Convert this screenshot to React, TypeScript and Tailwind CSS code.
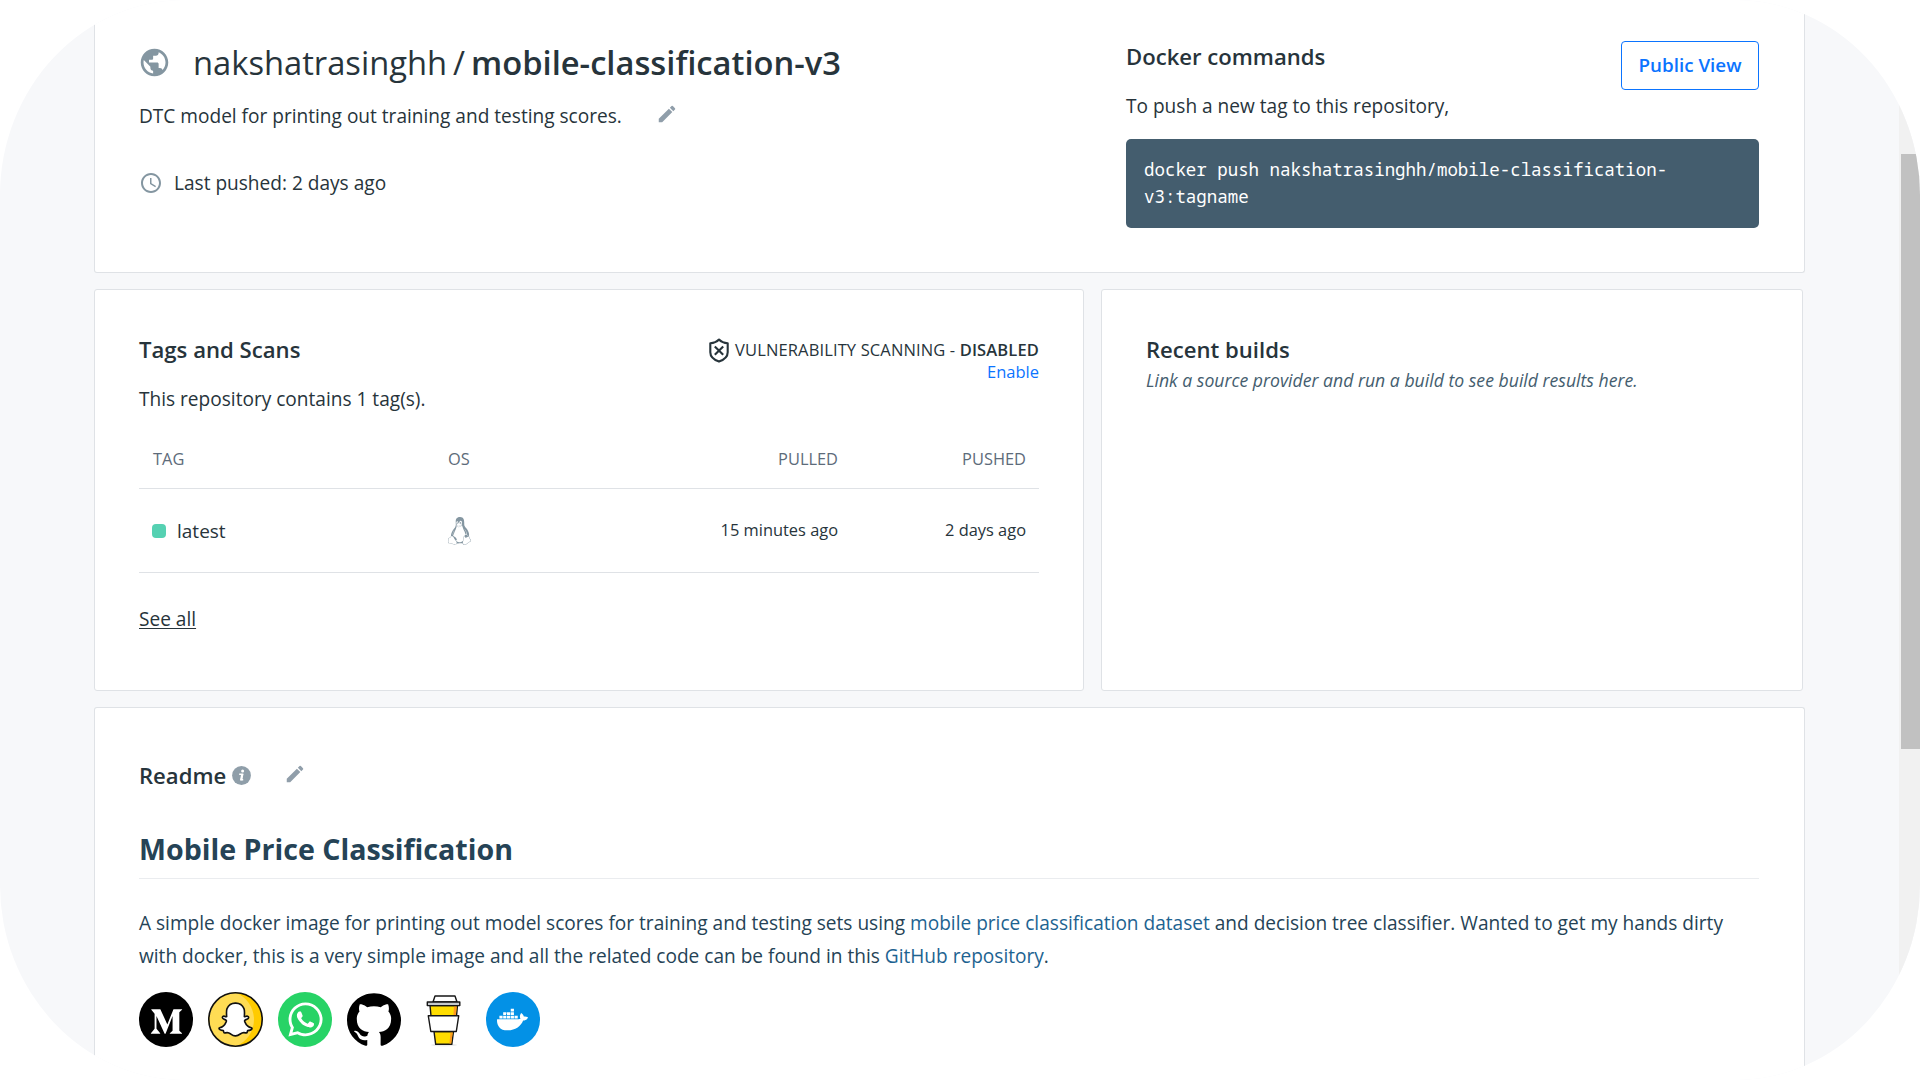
import React from 'react';
import { MdPublic, MdEdit, MdAccessTime } from 'react-icons/md';
import { FaLinux, FaMediumM, FaSnapchatGhost, FaWhatsapp, FaDocker } from 'react-icons/fa';
import { SiGithub } from 'react-icons/si';

function ShieldOff() {
  return (
    <svg viewBox="0 0 20 25" className="h-[25px] w-[20px]" fill="none" stroke="#27343b" strokeWidth="2.1" strokeLinejoin="round">
      <path d="M10 1.5C8 3.6 4.6 5 1.3 5.2V14.2C1.3 18.6 5.6 22 10 23.6C14.4 22 18.7 18.6 18.7 14.2V5.2C15.4 5 12 3.6 10 1.5Z" />
      <path d="M5.8 8.4L14.2 16.8M14.2 8.4L5.8 16.8" />
    </svg>
  );
}

function InfoBadge() {
  return (
    <svg viewBox="0 0 19 19" className="h-[19px] w-[19px]">
      <circle cx="9.5" cy="9.5" r="9.4" fill="#8f9ea9" />
      <circle cx="10.6" cy="4.9" r="1.5" fill="#fff" />
      <path d="M7.2 8.2H10.5L9.2 13.7H11.2" fill="none" stroke="#fff" strokeWidth="1.4" />
      <path d="M9.2 8L8 14.2H10.2L11.5 8Z" fill="#fff" />
    </svg>
  );
}

function CoffeeCup() {
  return (
    <svg viewBox="0 0 54 55" className="h-[55px] w-[54px]" stroke="#161616" strokeWidth="1.4" strokeLinejoin="round">
      <ellipse cx="27" cy="53" rx="13" ry="1.5" fill="#ececec" stroke="none" />
      <path d="M18 4H38L40 10H16Z" fill="#fff" />
      <path d="M13 13.5H40.5L39.5 24H14Z" fill="#ffdd00" />
      <path d="M37 14.3H39.7L38.8 23.5H36.4Z" fill="#ff9a1f" stroke="none" />
      <path d="M10.3 10H42.8V13.6H10.3Z" fill="#c6cacd" />
      <path d="M17 39.5H36.5L34.8 52.3H18.7Z" fill="#ffdd00" />
      <path d="M33.6 40.2H35.8L34.2 51.6H32.4Z" fill="#ff9a1f" stroke="none" />
      <path d="M11.3 23.8H41.7L39.3 39.5H13.8Z" fill="#fff" />
    </svg>
  );
}

function SnapBadge() {
  return (
    <div className="relative flex h-[55px] w-[55px] items-center justify-center">
      <svg viewBox="0 0 55 55" className="absolute inset-0 h-full w-full">
        <circle cx="27.5" cy="27.5" r="27" fill="#ffcb00" />
        <path d="M27.5 0.5A27 27 0 0 0 27.5 54.5C39 50 46 39 46 27.5C46 16 39 5 27.5 0.5Z" fill="#ffdc54" />
        <circle cx="27.5" cy="27.5" r="26.7" fill="none" stroke="#111" strokeWidth="1.6" />
      </svg>
      <FaSnapchatGhost className="relative h-[35px] w-[33px] overflow-visible text-white" stroke="#111" strokeWidth="25" preserveAspectRatio="none" />
    </div>
  );
}

const card = 'border border-[#dfe2e6] bg-white';

export default function App() {
  return (
    <div className="h-[1080px] w-[1920px] overflow-hidden bg-white font-['Open_Sans',sans-serif] text-[19.08px] leading-[26px] text-[#27343b]">
      <div className="flex h-full overflow-hidden rounded-[185px/195px] bg-[#f7f8fa]">
        <main className="ml-[94px] flex w-[1711px] shrink-0 flex-col gap-4">
          <section className="flex h-[273px] shrink-0 justify-between rounded-b-[3px] border border-t-0 border-[#dfe2e6] bg-white pt-[41px] pr-[45px] pl-[44px]">
            <div>
              <h1 className="mt-px flex h-10 items-center text-[32.7px] leading-10 whitespace-nowrap">
                <MdPublic className="-ml-px h-[33px] w-[33px] text-[#8496a1]" />
                <span className="mt-px ml-[22px]">nakshatrasinghh</span>
                <span className="mt-px ml-[6px]">/</span>
                <span className="mt-px ml-[6px] font-semibold">mobile-classification-v3</span>
              </h1>
              <div className="mt-[21px] flex items-center">
                <p>DTC model for printing out training and testing scores.</p>
                <MdEdit className="ml-[34px] -mt-1 h-[22px] w-[22px] text-[#909eaa]" />
              </div>
              <div className="mt-[41px] flex items-center">
                <MdAccessTime className="h-6 w-6 text-[#8496a1]" />
                <p className="ml-[11px]">Last pushed: 2 days ago</p>
              </div>
            </div>
            <div className="w-[633px]">
              <div className="flex h-[49px] justify-between">
                <h2 className="text-[22.1px] leading-[30px] font-semibold">Docker commands</h2>
                <button className="h-[49px] w-[138px] rounded-[4px] border border-[#0b74ff] pb-px text-[18.8px] font-semibold text-[#0b74ff]">Public View</button>
              </div>
              <p className="mt-[3px]">To push a new tag to this repository,</p>
              <pre className="mt-5 h-[89px] rounded-[5px] bg-[#445d6e] pt-[17px] pl-[18px] font-['Noto_Sans_Mono','DejaVu_Sans_Mono',monospace] text-[17.45px] leading-[27px] text-white">{'docker push nakshatrasinghh/mobile-classification-\nv3:tagname'}</pre>
            </div>
          </section>

          <div className="flex h-[402px] shrink-0 gap-[17px]">
            <section className={`${card} w-[990px] rounded-[3px] px-[44px] pt-[44px]`}>
              <div className="flex h-[52px] items-start justify-between">
                <h2 className="text-[22.15px] leading-[30px] font-semibold">Tags and Scans</h2>
                <div className="mt-[4px] text-[16.5px] leading-[22px]">
                  <div className="flex items-center">
                    <ShieldOff />
                    <span className="-mt-[2px] ml-[6px] whitespace-pre tracking-[0.13px]">VULNERABILITY SCANNING - <b className="font-semibold">DISABLED</b></span>
                  </div>
                  <p className="-mt-[2px] text-right text-[#0b74ff]">Enable</p>
                </div>
              </div>
              <p>This repository contains 1 tag(s).</p>
              <div className="mt-[35px] grid h-[42px] grid-cols-[295px_217px_200px_188px] border-b border-[#dfe2e6] text-[16.4px] leading-6 text-[#5d6b7a]">
                <span className="pl-[14px]">TAG</span>
                <span className="pl-[14px]">OS</span>
                <span className="pr-[13px] text-right">PULLED</span>
                <span className="pr-[13px] text-right">PUSHED</span>
              </div>
              <div className="grid h-[84px] grid-cols-[295px_217px_200px_188px] items-center border-b border-[#dfe2e6] text-[16.4px]">
                <div className="flex items-center pl-[13px]">
                  <span className="h-[14px] w-[14px] rounded-[4px] bg-[#55d1b2]" />
                  <span className="ml-[11px] text-[19px]">latest</span>
                </div>
                <div className="pl-[13px]"><FaLinux className="h-[28px] w-[25px] text-[#8496a1]" /></div>
                <span className="-mt-[2px] pr-[13px] text-right">15 minutes ago</span>
                <span className="-mt-[2px] pr-[13px] text-right">2 days ago</span>
              </div>
              <a className="mt-[33px] block w-fit underline underline-offset-2">See all</a>
            </section>
            <section className={`${card} w-[702px] rounded-[3px] px-[44px] pt-[44px]`}>
              <h2 className="text-[22.1px] leading-[30px] font-semibold">Recent builds</h2>
              <p className="mt-[4px] text-[17.65px] leading-6 text-[#445d6e] italic">Link a source provider and run a build to see build results here.</p>
            </section>
          </div>

          <section className="flex-1 rounded-t-[3px] border border-b-0 border-[#dfe2e6] bg-white pt-[52px] pr-[45px] pl-[44px]">
            <div className="flex h-[30px] items-center">
              <h2 className="text-[22.1px] leading-[30px] font-semibold">Readme</h2>
              <div className="ml-[5.5px]"><InfoBadge /></div>
              <MdEdit className="-mt-[2px] ml-[33px] h-[22px] w-[22px] text-[#909eaa]" />
            </div>
            <div className="text-[#254356]">
              <h1 className="mt-[41px] h-[48px] border-b border-[#eaecef] text-[28.6px] leading-9 font-bold">Mobile Price Classification</h1>
              <p className="mt-[28px] text-[19.09px] leading-[33px]">
                A simple docker image for printing out model scores for training and testing sets using <a className="text-[#1d6391]">mobile price classification dataset</a> and decision tree classifier. Wanted to get my hands dirty<br />
                with docker, this is a very simple image and all the related code can be found in this <a className="text-[#1d6391]">GitHub repository</a>.
              </p>
            </div>
            <div className="mt-[19px] flex h-[55px] w-[401px] items-center justify-between">
              <div className="flex h-[55px] w-[54px] items-center justify-center rounded-full bg-black text-white"><FaMediumM className="mt-1 h-[33px] w-[33px]" /></div>
              <SnapBadge />
              <div className="flex h-[55px] w-[54px] items-center justify-center rounded-full bg-[#27d366] text-white"><FaWhatsapp className="h-[39px] w-[39px]" /></div>
              <SiGithub className="-ml-px mr-px h-[55px] w-[54px] text-black" />
              <CoffeeCup />
              <div className="flex h-[55px] w-[54px] items-center justify-center rounded-full bg-[#0391e6] text-white"><FaDocker className="h-[31px] w-[31px]" /></div>
            </div>
          </section>
        </main>
        <div className="ml-auto flex w-[21px] justify-end bg-[#f1f1f1] pt-[154px]">
          <div className="h-[595px] w-[19px] bg-[#c1c1c1]" />
        </div>
      </div>
    </div>
  );
}
